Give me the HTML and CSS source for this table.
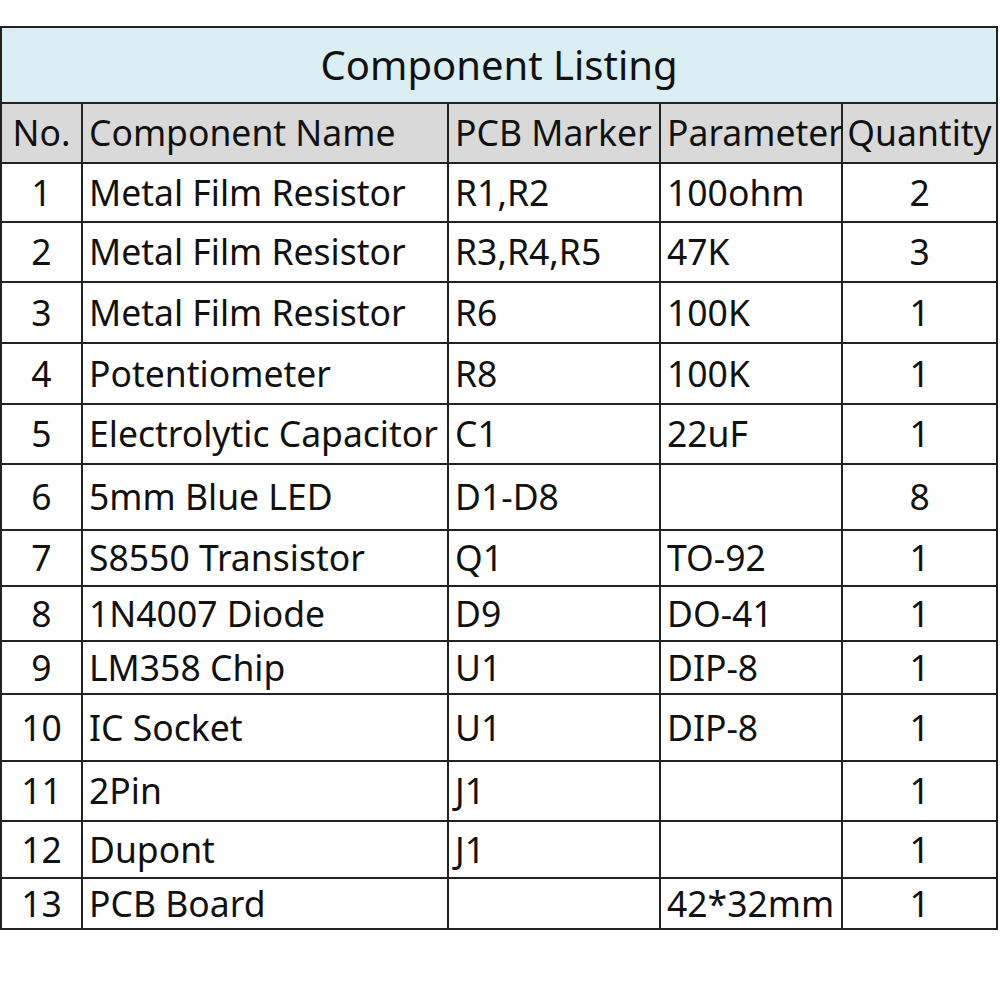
FILE: index.html
```html
<!DOCTYPE html>
<html>
<head>
<meta charset="utf-8">
<link rel="stylesheet" href="styles.css">
</head>
<body>
<table class="list">
  <colgroup>
    <col class="c-no"><col class="c-name"><col class="c-pcb"><col class="c-par"><col class="c-qty">
  </colgroup>
  <tr class="title"><td colspan="5">Component Listing</td></tr>
  <tr class="head">
    <td class="ctr">No.</td><td>Component Name</td><td>PCB Marker</td><td>Parameter</td><td class="ctr">Quantity</td>
  </tr>
  <tr><td class="ctr">1</td><td>Metal Film Resistor</td><td>R1,R2</td><td>100ohm</td><td class="ctr">2</td></tr>
  <tr><td class="ctr">2</td><td>Metal Film Resistor</td><td>R3,R4,R5</td><td>47K</td><td class="ctr">3</td></tr>
  <tr><td class="ctr">3</td><td>Metal Film Resistor</td><td>R6</td><td>100K</td><td class="ctr">1</td></tr>
  <tr><td class="ctr">4</td><td>Potentiometer</td><td>R8</td><td>100K</td><td class="ctr">1</td></tr>
  <tr><td class="ctr">5</td><td>Electrolytic Capacitor</td><td>C1</td><td>22uF</td><td class="ctr">1</td></tr>
  <tr><td class="ctr">6</td><td>5mm Blue LED</td><td>D1-D8</td><td></td><td class="ctr">8</td></tr>
  <tr><td class="ctr">7</td><td>S8550 Transistor</td><td>Q1</td><td>TO-92</td><td class="ctr">1</td></tr>
  <tr><td class="ctr">8</td><td>1N4007 Diode</td><td>D9</td><td>DO-41</td><td class="ctr">1</td></tr>
  <tr><td class="ctr">9</td><td>LM358 Chip</td><td>U1</td><td>DIP-8</td><td class="ctr">1</td></tr>
  <tr><td class="ctr">10</td><td>IC Socket</td><td>U1</td><td>DIP-8</td><td class="ctr">1</td></tr>
  <tr><td class="ctr">11</td><td>2Pin</td><td>J1</td><td></td><td class="ctr">1</td></tr>
  <tr><td class="ctr">12</td><td>Dupont</td><td>J1</td><td></td><td class="ctr">1</td></tr>
  <tr><td class="ctr">13</td><td>PCB Board</td><td></td><td>42*32mm</td><td class="ctr">1</td></tr>
</table>
</body>
</html>
```
FILE: styles.css
```css
html, body {
  margin: 0;
  padding: 0;
  background: #ffffff;
}
body {
  padding: 26px 0 0 0;
  font-family: "Noto Sans", "Open Sans", sans-serif;
  color: #111;
}
.list {
  border-collapse: collapse;
  table-layout: fixed;
  width: 996px;
  font-size: 35.5px;
}
.c-no { width: 81px; }
.c-name { width: 366px; }
.c-pcb { width: 212px; }
.c-par { width: 182px; }
.c-qty { width: 155px; }
.list td {
  border: 2px solid #222;
  padding: 0 0 0 6px;
  vertical-align: middle;
  white-space: nowrap;
  overflow: visible;
  line-height: 1;
}
.list td.ctr {
  text-align: center;
  padding: 0;
}
.title td {
  background: #daeef3;
  text-align: center;
  height: 74px;
  padding: 0;
  font-size: 40px;
}
.head td {
  background: #d9d9d9;
}
.head { height: 60px; }
.list tr:nth-child(3) { height: 59px; }
.list tr:nth-child(4) { height: 60px; }
.list tr:nth-child(5) { height: 61px; }
.list tr:nth-child(6) { height: 61px; }
.list tr:nth-child(7) { height: 60px; }
.list tr:nth-child(8) { height: 66px; }
.list tr:nth-child(9) { height: 56px; }
.list tr:nth-child(10) { height: 55px; }
.list tr:nth-child(11) { height: 53px; }
.list tr:nth-child(12) { height: 67px; }
.list tr:nth-child(13) { height: 60px; }
.list tr:nth-child(14) { height: 57px; }
.list tr:nth-child(15) { height: 51px; }
```
